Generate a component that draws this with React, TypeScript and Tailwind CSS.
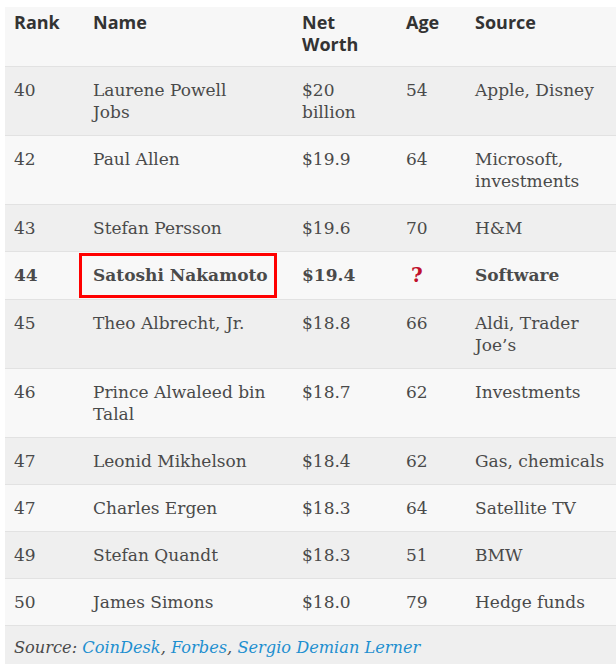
import React from "react";

type Row = { rank: string; name: string; worth: string; age: string; source: string; hl?: boolean };

const rows: Row[] = [
  { rank: "40", name: "Laurene Powell\nJobs", worth: "$20 billion", age: "54", source: "Apple, Disney" },
  { rank: "42", name: "Paul Allen", worth: "$19.9", age: "64", source: "Microsoft, investments" },
  { rank: "43", name: "Stefan Persson", worth: "$19.6", age: "70", source: "H&M" },
  { rank: "44", name: "Satoshi Nakamoto", worth: "$19.4", age: "?", source: "Software", hl: true },
  { rank: "45", name: "Theo Albrecht, Jr.", worth: "$18.8", age: "66", source: "Aldi, Trader Joe\u2019s" },
  { rank: "46", name: "Prince Alwaleed bin\nTalal", worth: "$18.7", age: "62", source: "Investments" },
  { rank: "47", name: "Leonid Mikhelson", worth: "$18.4", age: "62", source: "Gas, chemicals" },
  { rank: "47", name: "Charles Ergen", worth: "$18.3", age: "64", source: "Satellite TV" },
  { rank: "49", name: "Stefan Quandt", worth: "$18.3", age: "51", source: "BMW" },
  { rank: "50", name: "James Simons", worth: "$18.0", age: "79", source: "Hedge funds" },
];

const serif = { fontFamily: '"DejaVu Serif", "Liberation Serif", serif' };

export default function App() {
  return (
    <div className="w-[616px] h-[671px] bg-white pt-[7px] pl-[5px]">
      <div className="w-[611px]">
        <table className="w-full border-collapse table-fixed text-[#4a4a4a]">
          <colgroup>
            <col className="w-[79px]" />
            <col className="w-[209px]" />
            <col className="w-[104px]" />
            <col className="w-[69px]" />
            <col className="w-[150px]" />
          </colgroup>
          <thead>
            <tr
              className="bg-[#f7f7f7] border-b border-[#e2e2e2] text-[#333] text-[18px] leading-[22px] font-bold text-left align-top"
              style={{ fontFamily: '"Open Sans", "Liberation Sans", sans-serif' }}
            >
              <th className="pl-[9px] pt-[4px] pb-[11px] font-bold">Rank</th>
              <th className="pl-[9px] pt-[4px] pb-[11px] font-bold">Name</th>
              <th className="pl-[9px] pt-[4px] pb-[11px] font-bold">Net<br />Worth</th>
              <th className="pl-[9px] pt-[4px] pb-[11px] font-bold">Age</th>
              <th className="pl-[9px] pt-[4px] pb-[11px] font-bold">Source</th>
            </tr>
          </thead>
          <tbody className="text-[17px] leading-[22px]" style={serif}>
            {rows.map((r, i) => (
              <tr
                key={i}
                className={`align-top border-b border-[#e2e2e2] ${i % 2 === 0 ? "bg-[#efefef]" : "bg-[#f8f8f8]"} ${r.hl ? "font-bold" : ""}`}
              >
                <td className="pl-[9px] pt-[12px] pb-[12px]">{r.rank}</td>
                {r.hl ? (
                  <td className="pt-[1px] pb-[1px]">
                    <div className="-ml-[5px] w-[198px] h-[45px] border-[3px] border-[#ff0000] pl-[11px] pt-[8px] whitespace-nowrap">
                      {r.name}
                    </div>
                  </td>
                ) : (
                  <td className="pl-[9px] pt-[12px] pb-[12px] pr-[6px] whitespace-pre-line">{r.name}</td>
                )}
                <td className="pl-[9px] pt-[12px] pb-[12px] pr-[6px]">{r.worth}</td>
                <td className="pl-[9px] pt-[12px] pb-[12px]">
                  {r.age === "?" ? (
                    <span className="text-[#c0102c] font-bold pl-[5px] text-[20px]">?</span>
                  ) : (
                    r.age
                  )}
                </td>
                <td className="pl-[9px] pt-[12px] pb-[12px]">{r.source}</td>
              </tr>
            ))}
          </tbody>
        </table>
        <div className="bg-[#efefef] h-[38px] pl-[9px] pt-[11px] text-[16.2px] leading-[22px] italic text-[#4a4a4a]" style={serif}>
          Source: <span className="text-[#1e8fd0]">CoinDesk</span>, <span className="text-[#1e8fd0]">Forbes</span>,{" "}
          <span className="text-[#1e8fd0]">Sergio Demian Lerner</span>
        </div>
      </div>
    </div>
  );
}
